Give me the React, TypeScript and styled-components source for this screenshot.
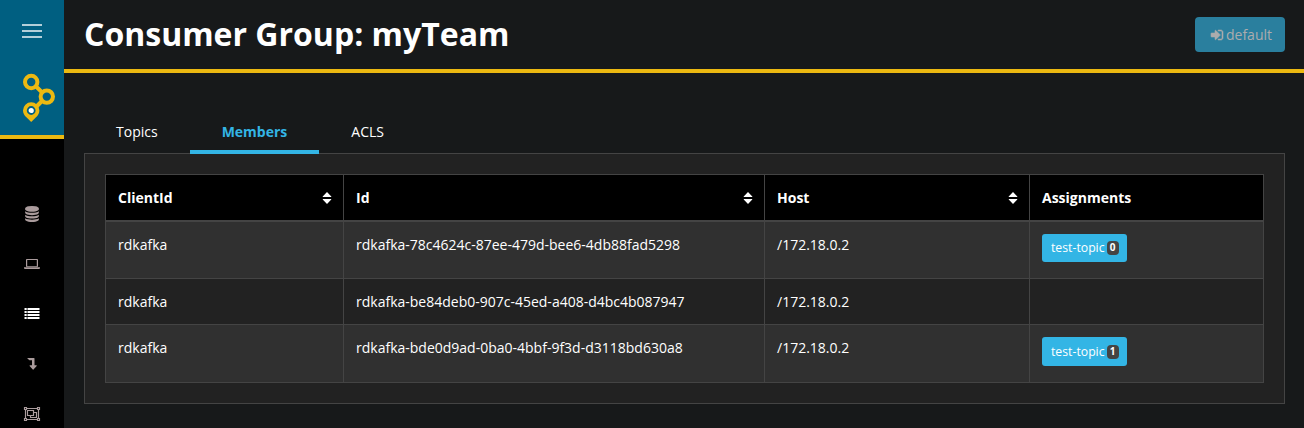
import React from "react";
import styled, { createGlobalStyle } from "styled-components";

const GlobalStyle = createGlobalStyle`
  * { box-sizing: border-box; }
  body {
    margin: 0;
    background: #17191a;
    color: #fff;
    font-family: "Open Sans", "Noto Sans", sans-serif;
    font-size: 14px;
    line-height: 21px;
    overflow: hidden;
  }
`;

const Page = styled.div`
  display: flex;
  height: 428px;
`;

const Sidebar = styled.aside`
  width: 64px;
  flex: none;
  background: #000;
`;

const Brand = styled.div`
  height: 139px;
  background: #005f81;
  border-bottom: 4px solid #ecb911;
  display: flex;
  flex-direction: column;
  align-items: center;
`;

const MenuToggle = styled.div`
  width: 20px;
  height: 14px;
  margin-top: 24px;
  display: flex;
  flex-direction: column;
  justify-content: space-between;
`;

const MenuBar = styled.span`
  height: 2px;
  background: #b3cfd9;
`;

const Logo = styled.svg`
  width: 34px;
  height: 50px;
  margin: 34px 0 0 14px;
  flex: none;
`;

const Nav = styled.nav`
  padding-top: 50px;
`;

const NavItem = styled.a<{ $active?: boolean }>`
  display: flex;
  align-items: center;
  justify-content: center;
  height: 50px;
  color: ${(p) => (p.$active ? "#fff" : "#ab9c9d")};
`;

const Glyph = styled.svg<{ $w?: number; $h?: number }>`
  width: ${(p) => p.$w ?? 16}px;
  height: ${(p) => p.$h ?? 16}px;
  fill: currentColor;
  flex: none;
`;

const Main = styled.main`
  flex: 1;
  min-width: 0;
`;

const Header = styled.header`
  display: flex;
  justify-content: space-between;
  align-items: center;
  height: 73px;
  padding: 0 19px 0 20px;
  border-bottom: 4px solid #ecb911;
`;

const Title = styled.h1`
  margin: 0;
  padding-bottom: 2px;
  font-size: 32px;
  line-height: 38px;
  font-weight: 700;
`;

const LoginButton = styled.button`
  display: flex;
  align-items: center;
  justify-content: center;
  gap: 2px;
  width: 90px;
  height: 35px;
  padding: 0 0 0 2px;
  border: 0;
  border-radius: 4px;
  background: #2a7f9e;
  color: #acacad;
  font: 14px/21px "Open Sans", sans-serif;
`;

const Content = styled.section`
  padding: 37px 19px 0 20px;
`;

const Tabs = styled.div`
  display: flex;
  height: 44px;
  margin-bottom: -1px;
`;

const Tab = styled.div<{ $active?: boolean }>`
  position: relative;
  padding: 11px 32px 0;
  height: 44px;
  color: ${(p) => (p.$active ? "#33b5e5" : "#fff")};
  font-weight: ${(p) => (p.$active ? 700 : 400)};
  border-bottom: 4px solid ${(p) => (p.$active ? "#33b5e5" : "transparent")};
`;

const Panel = styled.div`
  padding: 20px;
  border: 1px solid #444;
  background: #222;
`;

const Table = styled.table`
  width: 100%;
  table-layout: fixed;
  border-collapse: separate;
  border-spacing: 0;
  border: solid #444;
  border-width: 1px 0 0 1px;
`;

const HeadCell = styled.th<{ $width: number }>`
  width: ${(p) => p.$width}px;
  height: 47px;
  padding: 0 11px 0 12px;
  background: #000;
  border: solid #444;
  border-width: 0 1px 2px 0;
  text-align: left;
  font-weight: 700;
`;

const HeadContent = styled.div`
  display: flex;
  align-items: center;
  justify-content: space-between;
`;

const Row = styled.tr<{ $height: number }>`
  height: ${(p) => p.$height}px;
  &:nth-child(odd) { background: #303030; }
`;

const Cell = styled.td`
  padding: 12px 12px 0;
  border: solid #444;
  border-width: 0 1px 1px 0;
  vertical-align: top;
`;

const TopicTag = styled.span<{ $height: number }>`
  display: flex;
  align-items: center;
  width: 85px;
  height: ${(p) => p.$height}px;
  padding-left: 9px;
  gap: 2px;
  border-radius: 3px;
  background: #33b5e5;
  font-size: 12.25px;
  line-height: 18px;
`;

const Count = styled.span`
  width: 12px;
  height: 14px;
  border-radius: 4px;
  background: #444;
  font-size: 10px;
  line-height: 13px;
  font-weight: 700;
  text-align: center;
`;

const SortIcon = () => (
  <Glyph $w={10} $h={12} viewBox="0 0 10 12">
    <path d="M5 0 9.3 4.4Q9.5 5 9 5H1Q.5 5 .7 4.4ZM5 12 9.3 7.6Q9.5 7 9 7H1Q.5 7 .7 7.6Z" />
  </Glyph>
);

const DatabaseIcon = () => (
  <Glyph viewBox="0 0 1792 1792">
    <path d="M896 768q237 0 443-43t325-127v170q0 69-103 128t-280 93.5-385 34.5-385-34.5-280-93.5-103-128v-170q119 84 325 127t443 43zm0 768q237 0 443-43t325-127v170q0 69-103 128t-280 93.5-385 34.5-385-34.5-280-93.5-103-128v-170q119 84 325 127t443 43zm0-384q237 0 443-43t325-127v170q0 69-103 128t-280 93.5-385 34.5-385-34.5-280-93.5-103-128v-170q119 84 325 127t443 43zm0-1152q208 0 385 34.5t280 93.5 103 128v128q0 69-103 128t-280 93.5-385 34.5-385-34.5-280-93.5-103-128v-128q0-69 103-128t280-93.5 385-34.5z" />
  </Glyph>
);

const LaptopIcon = () => (
  <Glyph $h={10} viewBox="0 0 16 10">
    <path
      fillRule="evenodd"
      d="M2.800 0H13.200Q14 0 14 .8V7.200Q14 8 13.200 8H2.800Q2 8 2 7.200V.8Q2 0 2.800 0ZM3.200 1V7.300H12.800V1ZM0 8.200H16V9Q16 10 15 10H1Q0 10 0 9Z"
    />
  </Glyph>
);

const ListIcon = () => (
  <Glyph $h={12} viewBox="0 0 16 12">
    <path d="M.5 0h2.200v2h-2.200zM3.500 0h12v2h-12zM.5 3h2.200v2h-2.200zM3.500 3h12v2h-12zM.5 6h2.200v2h-2.200zM3.500 6h12v2h-12zM.5 9h2.200v2h-2.200zM3.500 9h12v2h-12z" />
  </Glyph>
);

const LevelDownIcon = () => (
  <Glyph $w={10} $h={12} viewBox="0 0 10 12">
    <path d="M.6 0H7Q7.5 0 7.5.5V7.2H9.4Q10 7.4 9.7 8L6.5 11.6Q6.2 12 5.8 11.6L2.6 8Q2.4 7.3 3 7.2H5V2.3H2.7Q2.4 2.3 2.2 2L.4.5Q.3.1.6 0Z" />
  </Glyph>
);

const ObjectGroupIcon = () => (
  <Glyph $w={18} $h={14} viewBox="0 0 18 14">
    <path
      fill="none"
      stroke="currentColor"
      strokeWidth="1.150"
      d="M1.500.5h2v2h-2zM14.500.5h2v2h-2zM1.500 11.500h2v2h-2zM14.500 11.500h2v2h-2zM3.500 1.500h11M3.500 12.500h11M2.500 2.500v9M15.500 2.500v9M4.500 3.500h6v5h-6zM10.500 5.500h3v5h-6v-2"
    />
  </Glyph>
);

const SignInIcon = () => (
  <Glyph $w={14} $h={14} viewBox="0 0 1792 1792">
    <path stroke="currentColor" strokeWidth="70" d="M1312 896q0 26-19 45l-544 544q-19 19-45 19t-45-19-19-45v-288h-448q-26 0-45-19t-19-45v-384q0-26 19-45t45-19h448v-288q0-26 19-45t45-19 45 19l544 544q19 19 19 45zm352-352v704q0 119-84.5 203.5t-203.5 84.5h-320q-13 0-22.5-9.5t-9.5-22.5q0-4-1-20t-.5-26.5 3-23.5 10-19.5 20.5-6.5h320q66 0 113-47t47-113v-704q0-66-47-113t-113-47h-312l-11.5-1-11.5-3-8-5.5-7-9-2-13.5q0-4-1-20t-.5-26.5 3-23.5 10-19.5 20.5-6.5h320q119 0 203.5 84.5t84.5 203.5z" />
  </Glyph>
);

const columns = [
  { label: "ClientId", width: 238, sortable: true },
  { label: "Id", width: 421, sortable: true },
  { label: "Host", width: 265, sortable: true },
  { label: "Assignments", width: 234, sortable: false },
];

const members = [
  { client: "rdkafka", id: "rdkafka-78c4624c-87ee-479d-bee6-4db88fad5298", host: "/172.18.0.2", partition: "0", height: 57 },
  { client: "rdkafka", id: "rdkafka-be84deb0-907c-45ed-a408-d4bc4b087947", host: "/172.18.0.2", partition: null, height: 46 },
  { client: "rdkafka", id: "rdkafka-bde0d9ad-0ba0-4bbf-9f3d-d3118bd630a8", host: "/172.18.0.2", partition: "1", height: 58 },
];

export default function App() {
  return (
    <>
      <GlobalStyle />
      <Page>
        <Sidebar>
          <Brand>
            <MenuToggle>
              <MenuBar />
              <MenuBar />
              <MenuBar />
            </MenuToggle>
            <Logo viewBox="0 0 34 50">
              <g fill="none" stroke="#ecb911" strokeWidth="4">
                <circle cx="9.2" cy="10" r="6.2" />
                <circle cx="24.8" cy="24.600" r="6.2" />
                <path d="M13.8 14.3 20 20.2M20 29 14 35" />
              </g>
              <path fill="#ecb911" d="M9.2 30.300a8.200 8.200 0 0 1 8.200 8.200c0 3-1.500 5-3.400 6.800L9.200 50l-4.800-4.700C2.500 43.500 1 41.500 1 38.500a8.200 8.200 0 0 1 8.200-8.200z" />
              <circle cx="9.200" cy="38.500" r="3.500" fill="#fff" stroke="#005f81" strokeWidth="1.800" />
            </Logo>
          </Brand>
          <Nav>
            <NavItem><DatabaseIcon /></NavItem>
            <NavItem><LaptopIcon /></NavItem>
            <NavItem $active><ListIcon /></NavItem>
            <NavItem><LevelDownIcon /></NavItem>
            <NavItem><ObjectGroupIcon /></NavItem>
          </Nav>
        </Sidebar>
        <Main>
          <Header>
            <Title>Consumer Group: myTeam</Title>
            <LoginButton disabled>
              <SignInIcon />
              default
            </LoginButton>
          </Header>
          <Content>
            <Tabs>
              <Tab>Topics</Tab>
              <Tab $active>Members</Tab>
              <Tab>ACLS</Tab>
            </Tabs>
            <Panel>
              <Table>
                <thead>
                  <tr>
                    {columns.map((c) => (
                      <HeadCell key={c.label} $width={c.width}>
                        <HeadContent>
                          {c.label}
                          {c.sortable && <SortIcon />}
                        </HeadContent>
                      </HeadCell>
                    ))}
                  </tr>
                </thead>
                <tbody>
                  {members.map((m) => (
                    <Row key={m.id} $height={m.height}>
                      <Cell>{m.client}</Cell>
                      <Cell>{m.id}</Cell>
                      <Cell>{m.host}</Cell>
                      <Cell>
                        {m.partition !== null && (
                          <TopicTag $height={m.height - 29}>
                            test-topic <Count>{m.partition}</Count>
                          </TopicTag>
                        )}
                      </Cell>
                    </Row>
                  ))}
                </tbody>
              </Table>
            </Panel>
          </Content>
        </Main>
      </Page>
    </>
  );
}
